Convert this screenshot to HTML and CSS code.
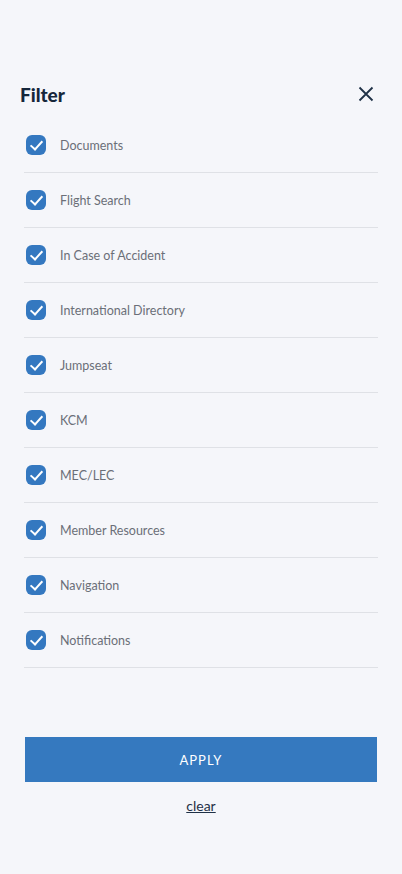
FILE: index.html
```html
<!DOCTYPE html>
<html lang="en">
<head>
    <meta charset="UTF-8">
    <meta name="viewport" content="width=device-width, initial-scale=1.0">
    <title>Filter</title>
    <link rel="stylesheet" href="styles.css">
</head>
<body>
    <div class="panel">
        <!-- Header -->
        <div class="header">
            <h1 class="title">Filter</h1>
            <button class="close" aria-label="Close">
                <svg width="16" height="16" viewBox="0 0 16 16"><path d="M1.5 1.5 L14.5 14.5 M14.5 1.5 L1.5 14.5" stroke="#1f3147" stroke-width="1.8" fill="none"/></svg>
            </button>
        </div>

        <ul class="list">
            <li class="row"><span class="check"></span><span class="label">Documents</span></li>
            <li class="row"><span class="check"></span><span class="label">Flight Search</span></li>
            <li class="row"><span class="check"></span><span class="label">In Case of Accident</span></li>
            <li class="row"><span class="check"></span><span class="label">International Directory</span></li>
            <li class="row"><span class="check"></span><span class="label">Jumpseat</span></li>
            <li class="row"><span class="check"></span><span class="label">KCM</span></li>
            <li class="row"><span class="check"></span><span class="label">MEC/LEC</span></li>
            <li class="row"><span class="check"></span><span class="label">Member Resources</span></li>
            <li class="row"><span class="check"></span><span class="label">Navigation</span></li>
            <li class="row"><span class="check"></span><span class="label">Notifications</span></li>
        </ul>

        <button class="apply">APPLY</button>
        <a class="clear" href="#">clear</a>
    </div>
</body>
</html>
```

FILE: styles.css
```css
body {
    margin: 0;
    background: #f5f6fa;
    font-family: Lato, "Noto Sans", sans-serif;
    color: #1f3147;
}
.panel {
    padding: 70px 24px 0 24px;
}
.header {
    height: 48px;
    display: flex;
    align-items: center;
    justify-content: space-between;
}
.title {
    margin: 0 0 0 -4px;
    font-size: 19px;
    font-weight: 900;
    color: #15263a;
}
.close {
    background: none;
    border: none;
    padding: 0;
    margin-right: 4px;
    width: 16px;
    height: 16px;
    display: flex;
}
.list {
    list-style: none;
    margin: 0;
    padding: 0;
}
.row {
    height: 54px;
    display: flex;
    align-items: center;
    border-bottom: 1px solid #dfe1e6;
    padding-left: 2px;
}
.check {
    width: 20px;
    height: 20px;
    border-radius: 6px;
    background: #3478c0;
    margin-right: 14px;
    position: relative;
}
.check::after {
    content: "";
    position: absolute;
    left: 7px;
    top: 3px;
    width: 5px;
    height: 10px;
    border: solid #fff;
    border-width: 0 2.5px 2.5px 0;
    transform: rotate(42deg);
}
.label {
    font-size: 12.5px;
    color: #6b6f78;
}
.apply {
    display: block;
    width: 352px;
    height: 45px;
    margin: 69px 0 0 1px;
    border: none;
    background: #3579bf;
    color: #fff;
    font-family: Lato, "Noto Sans", sans-serif;
    font-size: 13px;
    letter-spacing: 1px;
}
.clear {
    display: block;
    width: max-content;
    margin: 15px auto 0;
    font-size: 14px;
    color: #1f3147;
}
```
